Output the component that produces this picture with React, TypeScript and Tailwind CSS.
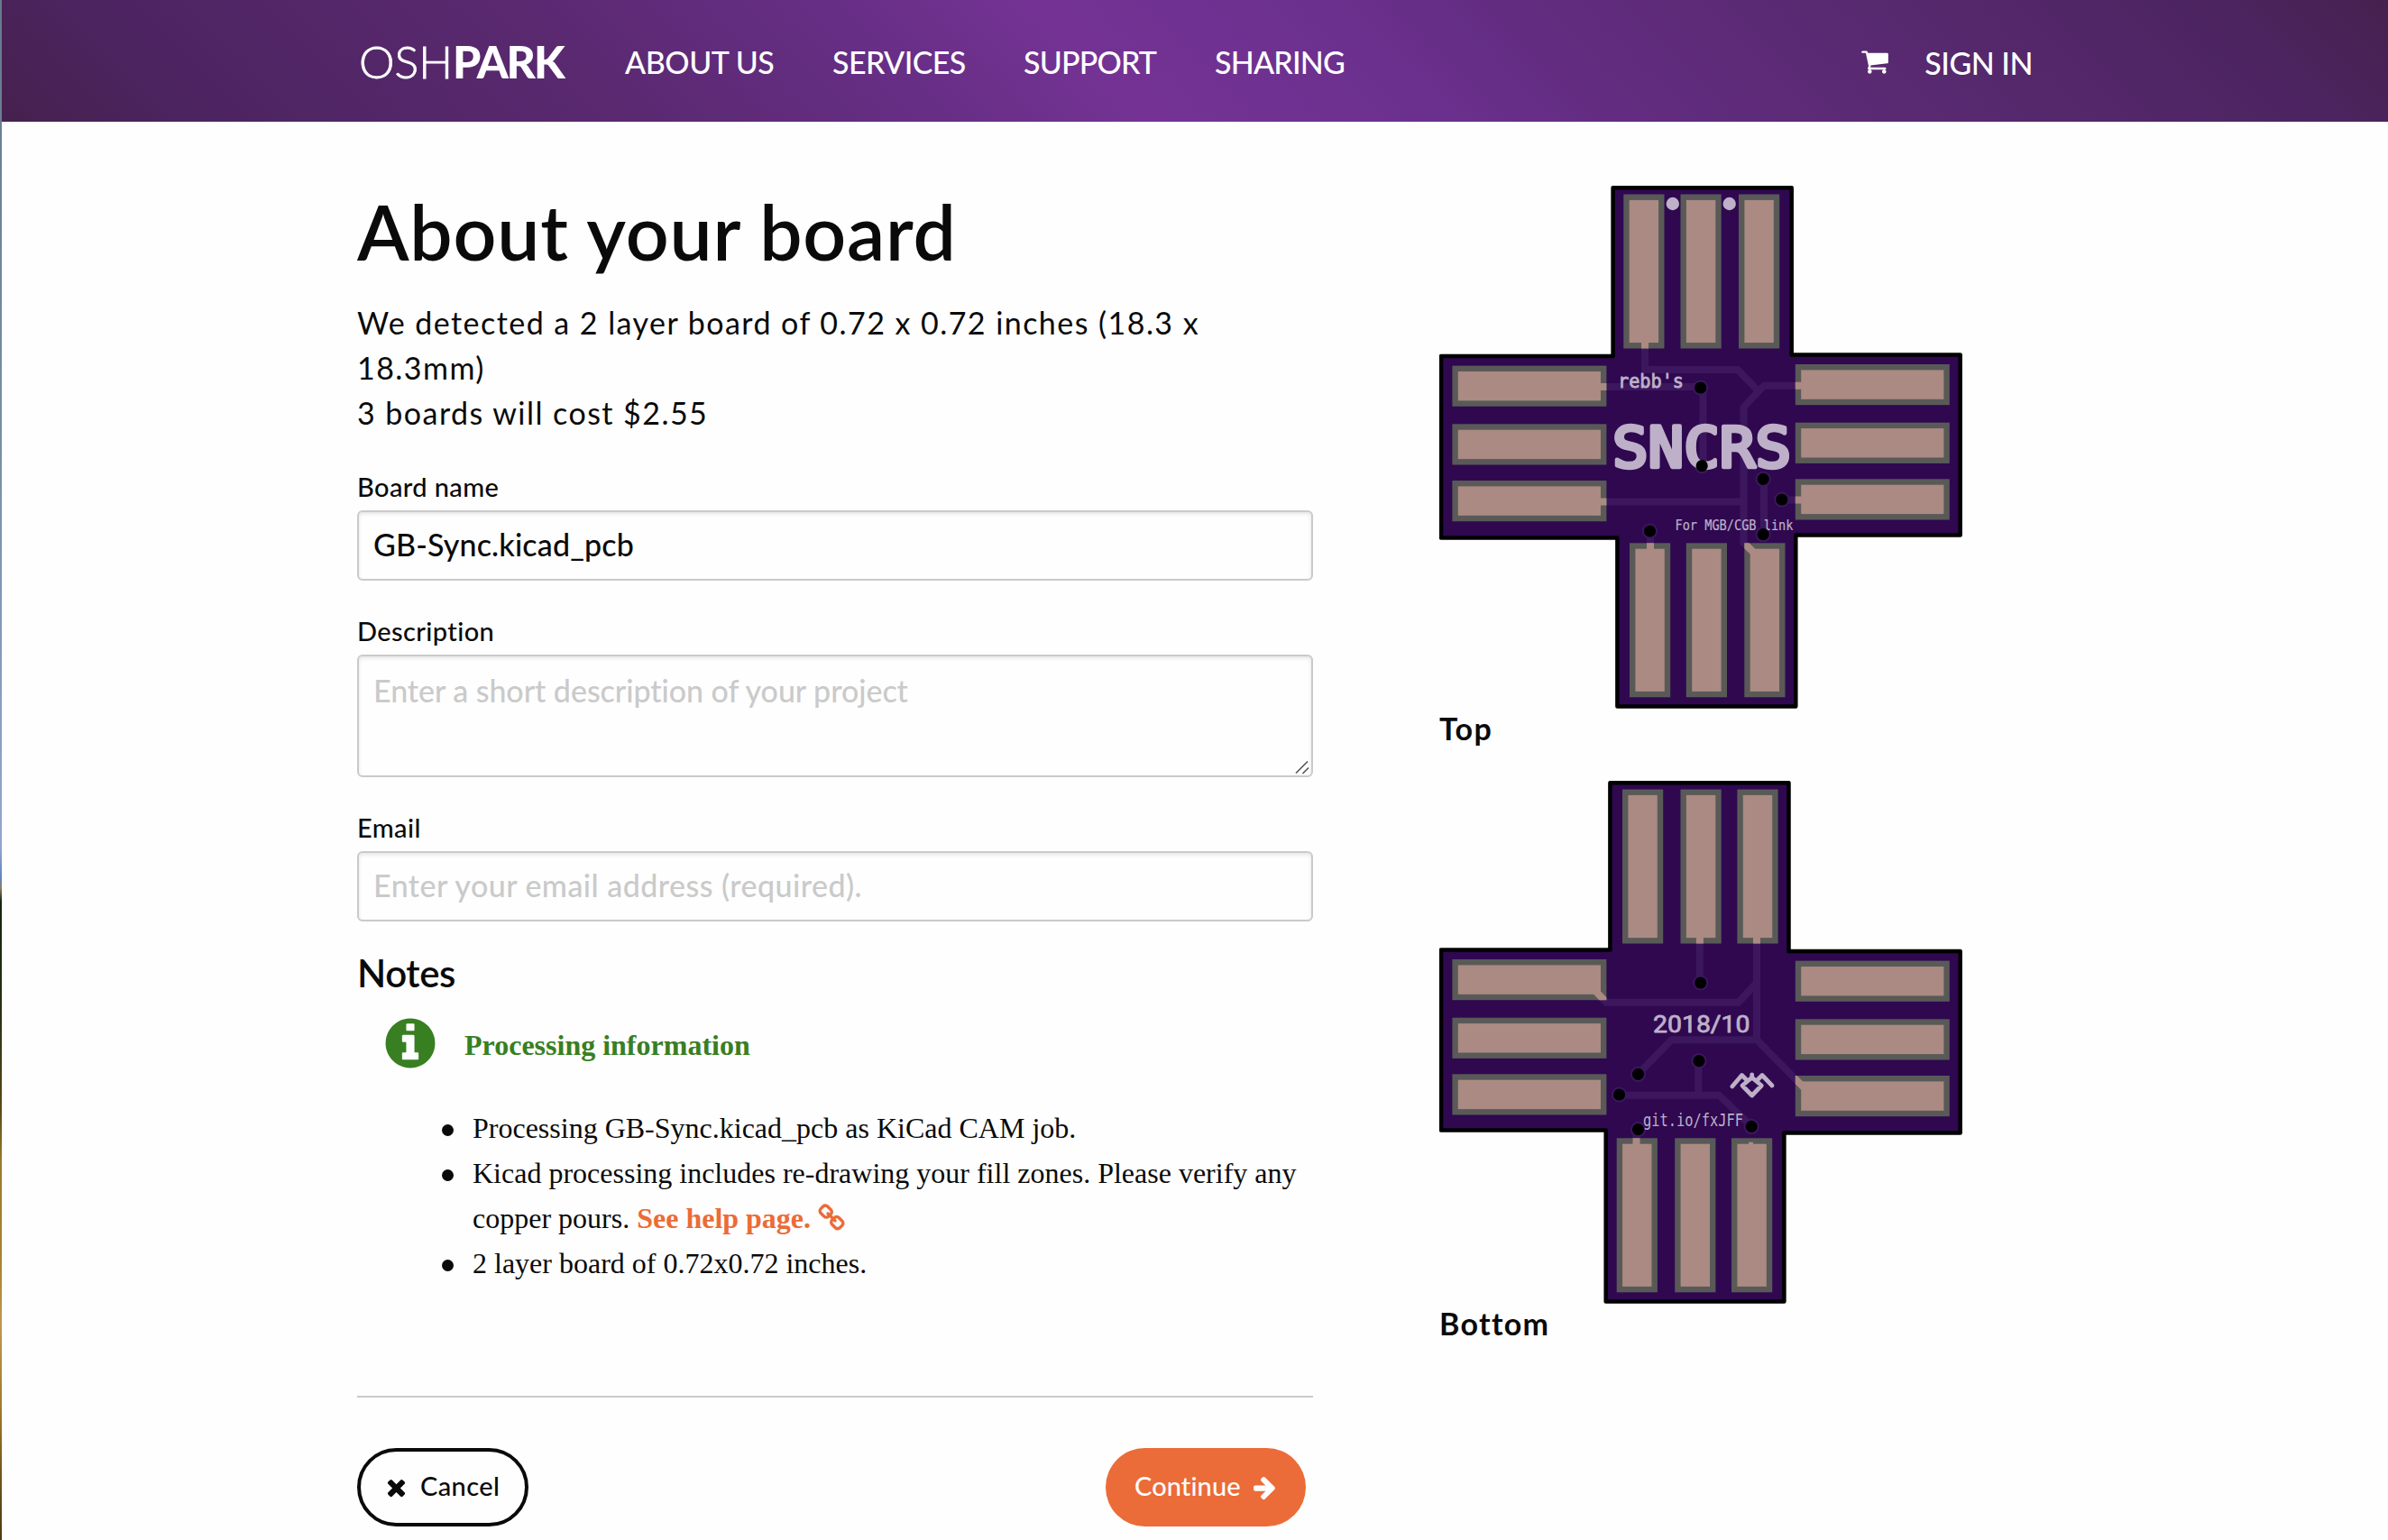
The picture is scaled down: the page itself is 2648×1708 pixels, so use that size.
import type { ReactNode } from "react";

const ICONS = {
  info: "M1152 1376v-160q0-14-9-23t-23-9h-96v-512q0-14-9-23t-23-9h-320q-14 0-23 9t-9 23v160q0 14 9 23t23 9h96v320h-96q-14 0-23 9t-9 23v160q0 14 9 23t23 9h448q14 0 23-9t9-23zm-128-896v-160q0-14-9-23t-23-9h-192q-14 0-23 9t-9 23v160q0 14 9 23t23 9h192q14 0 23-9t9-23zm640 416q0 209-103 385.5t-279.5 279.5-385.5 103-385.5-103-279.5-279.5-103-385.5 103-385.5 279.5-279.5 385.5-103 385.5 103 279.5 279.5 103 385.5z",
  cart: "M704 1536q0 52-38 90t-90 38-90-38-38-90 38-90 90-38 90 38 38 90zm896 0q0 52-38 90t-90 38-90-38-38-90 38-90 90-38 90 38 38 90zm128-1088v512q0 24-16.5 42.5t-40.5 21.5l-1044 122q13 60 13 70 0 16-24 64h920q26 0 45 19t19 45-19 45-45 19h-1024q-26 0-45-19t-19-45q0-11 8-31.5t16-36 21.5-40 15.5-29.5l-177-823h-204q-26 0-45-19t-19-45 19-45 45-19h256q16 0 28.5 6.5t19.5 15.5 13 24.5 8 26 5.5 29.5 4.5 26h1201q26 0 45 19t19 45z",
  times: "M1490 1322q0 40-28 68l-136 136q-28 28-68 28t-68-28l-294-294-294 294q-28 28-68 28t-68-28l-136-136q-28-28-28-68t28-68l294-294-294-294q-28-28-28-68t28-68l136-136q28-28 68-28t68 28l294 294 294-294q28-28 68-28t68 28l136 136q28 28 28 68t-28 68l-294 294 294 294q28 28 28 68z",
  arrow: "M1600 960q0 54-37 91l-651 651q-39 37-91 37-51 0-90-37l-75-75q-38-38-38-91t38-91l293-293h-704q-52 0-84.5-37.5t-32.5-90.5v-128q0-53 32.5-90.5t84.5-37.5h704l-293-294q-38-36-38-90t38-90l75-75q38-38 90-38 53 0 91 38l651 651q37 35 37 90z",
  chain: "M1520 1216q0-40-28-68l-208-208q-28-28-68-28-42 0-72 32 3 3 19 18.5t21.5 21.5 15 19 13 25.5 3.5 27.5q0 40-28 68t-68 28q-15 0-27.5-3.5t-25.5-13-19-15-21.5-21.5-18.5-19q-33 31-33 73 0 40 28 68l206 207q27 27 68 27 40 0 68-26l147-146q28-28 28-67zm-703-705q0-40-28-68l-206-207q-28-28-68-28-39 0-68 27l-147 146q-28 28-28 67 0 40 28 68l208 208q27 27 68 27 42 0 72-31-3-3-19-18.5t-21.5-21.5-15-19-13-25.5-3.5-27.5q0-40 28-68t68-28q15 0 27.5 3.5t25.5 13 19 15 21.5 21.5 18.5 19q33-31 33-73zm895 705q0 120-85 203l-147 146q-83 83-203 83-121 0-204-85l-206-207q-83-83-83-203 0-123 88-209l-88-88q-86 88-208 88-120 0-204-84l-208-208q-84-84-84-204t85-203l147-146q83-83 203-83 121 0 204 85l206 207q83 83 83 203 0 123-88 209l88 88q86-88 208-88 120 0 204 84l208 208q84 84 84 204z",
};

function Icon({ name, className }: { name: keyof typeof ICONS; className: string }) {
  return (
    <svg viewBox="0 0 1792 1792" className={className} fill="currentColor" aria-hidden="true">
      <path d={ICONS[name]} />
    </svg>
  );
}

type Box = [x: number, y: number, w: number, h: number];

type BoardProps = {
  label: string;
  outline: string;
  pads: Box[];
  traces: string;
  vias: [number, number][];
  children: ReactNode;
};

const COPPER = "#aa8a82";
const SILK = "#bdb0c8";

/* One side of the PCB: substrate, copper traces, pads with their mask openings, silkscreen, drills. */
function Board({ label, outline, pads, traces, vias, children }: BoardProps) {
  const clip = `pads-${label}`;
  return (
    <svg
      viewBox="1596 206 580 580"
      className="block h-[580px] w-[580px] font-normal tracking-normal"
      role="img"
      aria-label={`${label} of board`}
    >
      <clipPath id={clip}>
        {pads.map(([x, y, w, h]) => (
          <rect key={`${x}-${y}`} x={x} y={y} width={w} height={h} />
        ))}
      </clipPath>
      <path d={outline} fill="#2f0850" stroke="#000" strokeWidth="4.5" strokeLinejoin="round" />
      <path d={traces} fill="none" stroke="#3c175e" strokeWidth="8" />
      {vias.map(([x, y]) => (
        <circle key={`${x}-${y}`} cx={x} cy={y} r="8.6" fill="#3c175e" />
      ))}
      {pads.map(([x, y, w, h]) => (
        <rect key={`${x}-${y}`} x={x} y={y} width={w} height={h} fill="#595a57" />
      ))}
      <path d={traces} fill="none" stroke={COPPER} strokeWidth="8" clipPath={`url(#${clip})`} />
      {pads.map(([x, y, w, h]) => (
        <rect key={`${x}-${y}`} x={x + 6.4} y={y + 6.4} width={w - 12.8} height={h - 12.8} fill={COPPER} />
      ))}
      {children}
      {vias.map(([x, y]) => (
        <circle key={`${x}-${y}`} cx={x} cy={y} r="6.6" fill="#000" />
      ))}
    </svg>
  );
}

const column = (xs: number[], y: number): Box[] => xs.map((x) => [x, y, 45.2, 171]);
const row = (x: number, ys: number[]): Box[] => ys.map((y) => [x, y, 171, 45.2]);

function TopBoard() {
  return (
    <Board
      label="Top"
      outline="M1788.6 208.2H1986.7V393.6H2173.7V593.4H1991.3V783.5H1793.4V596.4H1598V395H1788.6Z"
      pads={[
        ...column([1800.3, 1863.5, 1928], 215.5),
        ...column([1807, 1869.8, 1934.3], 602.3),
        ...row(1610.4, [405.6, 470.3, 533]),
        ...row(1990.8, [404, 468.7, 531.3]),
      ]}
      traces="M1824 376V410H1926.8L1949.5 433.5M2000 427.7H1956L1933.5 451.5V602L1946 614M1774 429H1885.7M1888.4 430V517M1774 556.4H1933.5M1956 531V593M1975.8 554.6H2000M1830 589V614"
      vias={[[1885.7, 430], [1887.2, 516.7], [1955.2, 531.3], [1975.8, 554], [1829.5, 589], [1955.2, 592.7]]}
    >
      <circle cx="1854.8" cy="226" r="7.2" fill={SILK} />
      <circle cx="1917.7" cy="226" r="7.2" fill={SILK} />
      <g fill={SILK} stroke={SILK} strokeLinejoin="round" className="font-['DejaVu_Sans_Mono',monospace]">
        <text x="1794" y="429.5" fontSize="22" strokeWidth="0.9" textLength="73" lengthAdjust="spacingAndGlyphs">rebb's</text>
        <text x="1788" y="517.5" fontSize="62" strokeWidth="4.4" textLength="198" lengthAdjust="spacingAndGlyphs">SNCRS</text>
        <text x="1857.5" y="588" fontSize="15" strokeWidth="0.2" textLength="131" lengthAdjust="spacingAndGlyphs">For MGB/CGB link</text>
      </g>
    </Board>
  );
}

function BottomBoard() {
  return (
    <Board
      label="Bottom"
      outline="M1785.4 208.2H1983.5V395H2173.7V596.4H1978.4V783.5H1780.7V593.4H1598V393.6H1785.4Z"
      pads={[
        ...column([1799, 1863.5, 1926.4], 215.5),
        ...column([1792.7, 1857.2, 1920], 602.3),
        ...row(1610.4, [404, 468.7, 531.3]),
        ...row(1990.8, [405.6, 470.3, 533]),
      ]}
      traces="M1884.9 376V430M1948 376V493.3M1768 438L1781.3 451.7H1927.6L1948 430M1816.5 531.3L1853.6 493.3H1948L2000 546M1883.3 517V554.7M1795.5 554.7H1906.2L1942 589V594M1814.5 592.7V614"
      vias={[[1885.7, 430], [1884, 516.7], [1816.5, 531.3], [1795.5, 554], [1816.5, 592.7], [1942.2, 589.3]]}
    >
      <rect x="1939" y="606.7" width="5" height="3" fill={COPPER} />
      <g fill={SILK} stroke={SILK} strokeLinejoin="round">
        <text x="1833" y="484.6" fontSize="26" strokeWidth="0.8" textLength="107.5" lengthAdjust="spacingAndGlyphs" className="font-[Roboto,sans-serif]">2018/10</text>
        <text x="1822" y="589" fontSize="19" strokeWidth="0" textLength="111" lengthAdjust="spacingAndGlyphs" className="font-['DejaVu_Sans_Mono',monospace]">git.io/fxJFF</text>
      </g>
      <path
        d="M1920.8 545L1931.5 532.5L1937 538M1942.7 532V536M1948.5 538L1954 532.5L1965 544M1942.7 535L1953.3 544L1942.7 555L1932 544Z"
        fill="none"
        stroke={SILK}
        strokeWidth="4.8"
        strokeLinecap="round"
        strokeLinejoin="round"
      />
    </Board>
  );
}

function Label({ children }: { children: ReactNode }) {
  return <label className="-mb-[1px] block text-[29px] leading-[45px] font-medium tracking-[0.4px]">{children}</label>;
}

const field =
  "mt-[5px] block w-full resize-none rounded-[6px] border-2 border-[#cacaca] bg-[#fefefe] px-[16px] font-medium text-[34px] shadow-[inset_0_2px_4px_rgba(10,10,10,0.1)] placeholder:text-[#cacaca] placeholder:opacity-100";

export default function App() {
  return (
    <div className="flex h-[1708px] w-[2648px] overflow-hidden bg-[#fefefe] font-[Lato,sans-serif] text-[#0a0a0a]">
      <div className="w-[2px] shrink-0 bg-[linear-gradient(180deg,#667a8c_0px,#7590a8_500px,#93a5cc_940px,#5f86c4_972px,#8a8068_985px,#16240f_1000px,#2a3214_1130px,#5a4a18_1230px,#9a7c2c_1290px,#a8842c_1400px,#c09650_1470px,#a07c2a_1560px,#6e541c_1640px,#4a3a14_1708px)]" />
      <div className="flex min-w-0 flex-1 flex-col">
        <header className="flex h-[135px] shrink-0 items-center bg-[linear-gradient(45deg,#46214e_0%,#4c2460_8%,#5a2970_25%,#662e84_37%,#743394_46%,#6b308e_57%,#622c80_65%,#582970_78%,#4c2460_93%,#46214e_100%)] pl-[396px] text-white">
          <div className="flex w-[295px] text-[50px] leading-[60px]">
            <span className="font-light tracking-[0px] [-webkit-text-stroke:0.8px_white]">OSH</span>
            <span className="font-black tracking-[-2.2px]">PARK</span>
          </div>
          <nav className="flex pt-[2px] text-[34px] font-medium leading-[50px] tracking-[-0.6px]">
            <a className="w-[230px] tracking-[-0.45px]">ABOUT US</a>
            <a className="w-[212px]">SERVICES</a>
            <a className="w-[212px] tracking-[-0.8px]">SUPPORT</a>
            <a className="tracking-[-0.8px]">SHARING</a>
          </nav>
          <Icon name="cart" className="ml-auto size-8" />
          <a className="mr-[394px] ml-[39px] pt-[4px] text-[34px] font-medium leading-[50px] tracking-[-0.5px]">SIGN IN</a>
        </header>

        <main className="flex pl-[394px]">
          <form className="w-[1060px] pt-[72px]">
            <h1 className="text-[84px] leading-[100px] font-semibold tracking-[0.8px]">About your board</h1>
            <p className="mt-[26px] text-[34px] leading-[50px] tracking-[1.45px]">
              We detected a 2 layer board of 0.72 x 0.72 inches (18.3 x
              <br />
              18.3mm)
              <br />3 boards will cost $2.55
            </p>

            <div className="mt-[34px]">
              <Label>Board name</Label>
              <input className={`${field} h-[78px] pb-[4px] tracking-[0.15px]`} defaultValue="GB-Sync.kicad_pcb" />
            </div>
            <div className="mt-[33px]">
              <Label>Description</Label>
              <div className="relative">
                <textarea
                  className={`${field} h-[136px] overflow-hidden pt-[13px] leading-[50px] tracking-[-0.05px]`}
                  placeholder="Enter a short description of your project"
                />
                <svg viewBox="0 0 16 16" className="absolute right-[4px] bottom-[3px] size-4" fill="none" stroke="#555" strokeWidth="1.6">
                  <path d="M1 14.5L14 1.5M8.5 15L15 8.5" />
                </svg>
              </div>
            </div>
            <div className="mt-[33px]">
              <Label>Email</Label>
              <input className={`${field} h-[78px] pb-[4px] tracking-[0.45px]`} placeholder="Enter your email address (required)." />
            </div>

            <h2 className="mt-[27px] text-[42px] leading-[60px] font-semibold tracking-[-0.4px]">Notes</h2>
            <section className="font-['Liberation_Serif',serif] text-[32px] leading-[50px]">
              <div className="flex items-start pt-[16px] pl-[27px] text-[#387f22]">
                <Icon name="info" className="size-16" />
                <h3 className="mt-[9px] ml-[28px] font-bold">Processing information</h3>
              </div>
              <ul className="mt-[37px] pl-[94px]">
                {[
                  "Processing GB-Sync.kicad_pcb as KiCad CAM job.",
                  <>
                    Kicad processing includes re-drawing your fill zones. Please verify any
                    <br />
                    copper pours.{" "}
                    <a className="font-bold text-[#eb6c38]">
                      See help page. <Icon name="chain" className="-mt-[8px] -ml-[1px] inline size-8" />
                    </a>
                  </>,
                  "2 layer board of 0.72x0.72 inches.",
                ].map((note, i) => (
                  <li key={i} className="flex">
                    <span className="mt-[21px] mr-[21px] size-[13px] shrink-0 rounded-full bg-[#0a0a0a]" />
                    <span className="whitespace-nowrap">{note}</span>
                  </li>
                ))}
              </ul>
            </section>

            <hr className="mt-[122px] border-t-2 border-[#cacaca]" />
            <div className="mt-[56px] flex justify-between pr-[8px] text-[29px] font-medium tracking-[0.4px]">
              <button type="button" className="flex h-[87px] w-[190px] items-center rounded-full border-4 border-[#0a0a0a] bg-[#fefefe] pl-[25px]">
                <Icon name="times" className="size-[29px]" />
                <span className="ml-[12px] -mt-[3px]">Cancel</span>
              </button>
              <button type="button" className="flex h-[87px] w-[222px] items-center rounded-full bg-[#eb6c38] pl-[32px] text-[#fefefe]">
                <span className="-mt-[3px] tracking-[0.1px]">Continue</span>
                <Icon name="arrow" className="-mt-[1px] ml-[12px] size-[29px]" />
              </button>
            </div>
          </form>

          <aside className="ml-[140px] w-[580px] pt-[71px] text-[34px] leading-[50px] font-bold tracking-[1.3px]">
            <figure>
              <TopBoard />
              <figcaption className="-mt-[3px]">Top</figcaption>
            </figure>
            <figure className="mt-[33px]">
              <BottomBoard />
              <figcaption className="-mt-[3px]">Bottom</figcaption>
            </figure>
          </aside>
        </main>
      </div>
    </div>
  );
}
